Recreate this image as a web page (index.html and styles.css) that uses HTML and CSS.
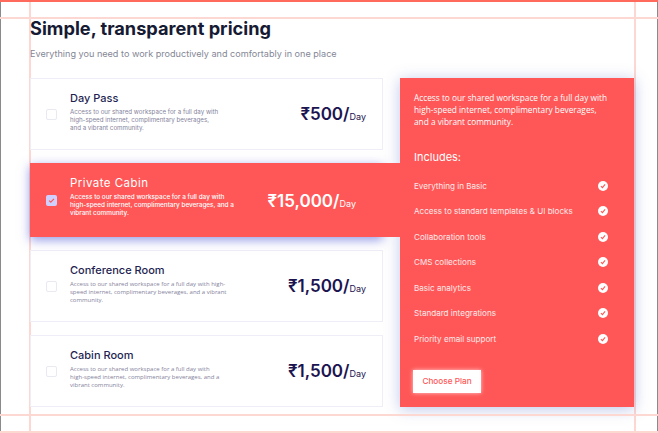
FILE: index.html
```html
<!DOCTYPE html>
<html>
<head>
    <meta charset="UTF-8">
    <meta name="viewport" content="width=device-width, initial-scale=1.0">
    <title>Pricing</title>
    <link rel="stylesheet" href="styles.css">
</head>
<body>
    <!-- design guides -->
    <div class="guide guide-h guide-top"></div>
    <div class="guide guide-h guide-top2"></div>
    <div class="guide guide-h guide-bottom"></div>
    <div class="guide guide-h guide-bottom2"></div>
    <div class="guide guide-v guide-left"></div>
    <div class="guide guide-v guide-right"></div>

    <section class="pricing">
        <h1 class="pricing-title">Simple, transparent pricing</h1>
        <p class="pricing-sub">Everything you need to work productively and comfortably in one place</p>

        <div class="pricing-body">
            <div class="plans">
                <div class="plan">
                    <span class="checkbox"></span>
                    <div class="plan-info">
                        <h3 class="plan-name">Day Pass</h3>
                        <p class="plan-desc plan-desc-tight">Access to our shared workspace for a full day with<br>high-speed internet, complimentary beverages,<br>and a vibrant community.</p>
                    </div>
                    <div class="plan-price"><span class="amount">₹500/</span><span class="unit">Day</span></div>
                </div>

                <div class="plan plan-active">
                    <span class="checkbox checkbox-on">
                        <svg viewBox="0 0 12 12" width="11" height="11"><path d="M3.4 6.2 5.2 7.9 8.7 4.2" fill="none" stroke="#ff5757" stroke-width="1.3"/></svg>
                    </span>
                    <div class="plan-info">
                        <h3 class="plan-name">Private Cabin</h3>
                        <p class="plan-desc plan-desc-tight">Access to our shared workspace for a full day with<br>high-speed internet, complimentary beverages, and a<br>vibrant community.</p>
                    </div>
                    <div class="plan-price"><span class="amount">₹15,000/</span><span class="unit">Day</span></div>
                </div>

                <div class="plan">
                    <span class="checkbox"></span>
                    <div class="plan-info">
                        <h3 class="plan-name">Conference Room</h3>
                        <p class="plan-desc">Access to our shared workspace for a full day with high-<br>speed internet, complimentary beverages, and a vibrant<br>community.</p>
                    </div>
                    <div class="plan-price"><span class="amount">₹1,500/</span><span class="unit">Day</span></div>
                </div>

                <div class="plan">
                    <span class="checkbox"></span>
                    <div class="plan-info">
                        <h3 class="plan-name">Cabin Room</h3>
                        <p class="plan-desc">Access to our shared workspace for a full day with<br>high-speed internet, complimentary beverages, and a<br>vibrant community.</p>
                    </div>
                    <div class="plan-price"><span class="amount">₹1,500/</span><span class="unit">Day</span></div>
                </div>
            </div>

            <aside class="details">
                <p class="details-text">Access to our shared workspace for a full day with<br>high-speed internet, complimentary beverages,<br>and a vibrant community.</p>
                <h4 class="details-title">Includes:</h4>
                <ul class="features">
                    <li>Everything in Basic <svg class="tick" viewBox="0 0 10 10"><circle cx="5" cy="5" r="5" fill="#fff"/><path d="M2.9 5.2 4.4 6.6 7.1 3.4" fill="none" stroke="#ff5757" stroke-width="1.1"/></svg></li>
                    <li>Access to standard templates &amp; UI blocks <svg class="tick" viewBox="0 0 10 10"><circle cx="5" cy="5" r="5" fill="#fff"/><path d="M2.9 5.2 4.4 6.6 7.1 3.4" fill="none" stroke="#ff5757" stroke-width="1.1"/></svg></li>
                    <li>Collaboration tools <svg class="tick" viewBox="0 0 10 10"><circle cx="5" cy="5" r="5" fill="#fff"/><path d="M2.9 5.2 4.4 6.6 7.1 3.4" fill="none" stroke="#ff5757" stroke-width="1.1"/></svg></li>
                    <li>CMS collections <svg class="tick" viewBox="0 0 10 10"><circle cx="5" cy="5" r="5" fill="#fff"/><path d="M2.9 5.2 4.4 6.6 7.1 3.4" fill="none" stroke="#ff5757" stroke-width="1.1"/></svg></li>
                    <li>Basic analytics <svg class="tick" viewBox="0 0 10 10"><circle cx="5" cy="5" r="5" fill="#fff"/><path d="M2.9 5.2 4.4 6.6 7.1 3.4" fill="none" stroke="#ff5757" stroke-width="1.1"/></svg></li>
                    <li>Standard integrations <svg class="tick" viewBox="0 0 10 10"><circle cx="5" cy="5" r="5" fill="#fff"/><path d="M2.9 5.2 4.4 6.6 7.1 3.4" fill="none" stroke="#ff5757" stroke-width="1.1"/></svg></li>
                    <li>Priority email support <svg class="tick" viewBox="0 0 10 10"><circle cx="5" cy="5" r="5" fill="#fff"/><path d="M2.9 5.2 4.4 6.6 7.1 3.4" fill="none" stroke="#ff5757" stroke-width="1.1"/></svg></li>
                </ul>
                <button class="choose-btn">Choose Plan</button>
            </aside>
        </div>
    </section>
</body>
</html>
```

FILE: styles.css
```css
* {
    margin: 0;
    padding: 0;
    box-sizing: border-box;
}

html, body {
    height: 100%;
    overflow: hidden;
}

body {
    background-color: #ffffff;
    color: #161a33;
    font-family: 'Inter', sans-serif;
    border-left: 1px solid #8a8a8a;
    border-right: 1px solid #8a8a8a;
}

/* Guides drawn over the page */
.guide {
    position: absolute;
    background: #fdd8d2;
    z-index: 20;
}

.guide-h {
    left: 0;
    width: 100%;
    height: 2px;
}

.guide-v {
    top: 0;
    width: 2px;
    height: 100%;
    z-index: 0;
}

.guide-top {
    top: 0;
    background: #ff6a5c;
}

.guide-top2 { top: 17px; }
.guide-bottom { top: 414px; }
.guide-bottom2 { top: 431px; }
.guide-left { left: 29px; }
.guide-right { left: 634px; }

.pricing {
    padding: 18px 23px 0 29px;
    position: relative;
    z-index: 1;
}

.pricing-title {
    font-size: 18.2px;
    line-height: 20px;
    font-weight: 700;
}

.pricing-sub {
    margin-top: 10px;
    font-size: 9.1px;
    line-height: 12px;
    color: #858796;
}

.pricing-body {
    display: flex;
    gap: 17px;
    margin-top: 18px;
}

.plans {
    width: 353px;
    display: flex;
    flex-direction: column;
    gap: 13px;
}

.plan {
    height: 72px;
    display: flex;
    align-items: center;
    padding: 0 16px 0 15px;
    border: 1px solid #eeeef6;
    background: #fff;
}

.plan-active {
    height: 74px;
    padding: 0 27px 0 16px;
    background: #ff5757;
    border: none;
    color: #fff;
    position: relative;
    z-index: 1;
    box-shadow: 0 3px 10px rgba(60, 70, 210, 0.55);
}

/* joins the selected row to the panel */
.plan-active::after {
    content: '';
    position: absolute;
    left: 100%;
    top: 0;
    width: 17px;
    height: 100%;
    background: #ff5757;
}

.checkbox {
    flex: none;
    width: 11px;
    height: 11px;
    border: 1px solid #e9e9f2;
    border-radius: 2px;
    background: #fff;
    margin-right: 13px;
}

.checkbox-on {
    background: #d0d0ff;
    border: none;
    display: flex;
}

.plan-info {
    flex: 1;
    padding-bottom: 5px;
}

.plan-name {
    font-size: 11px;
    line-height: 14px;
    font-weight: 500;
    color: #241f52;
    margin-bottom: 3px;
}

.plan-desc {
    font-family: 'Open Sans', sans-serif;
    font-size: 6px;
    line-height: 8.3px;
    color: #85839c;
}

.plan-desc-tight {
    font-family: 'Inter', sans-serif;
    font-size: 6.2px;
    line-height: 7.7px;
    margin-top: 1px;
}

.plan-active .plan-name {
    color: #fff;
    font-size: 11.5px;
    font-weight: 400;
    letter-spacing: 0.45px;
    margin-bottom: 4px;
}

.plan-active .plan-desc {
    color: #fff;
    font-size: 6.4px;
    font-weight: 500;
    line-height: 7.8px;
    padding-bottom: 1px;
}

.plan-price {
    white-space: nowrap;
    color: #1b1450;
}

.plan-active .plan-price {
    color: #fff;
    margin-top: 2px;
}

.amount {
    font-size: 17px;
    font-weight: 600;
}

.unit {
    font-size: 9px;
}

/* Right panel */
.details {
    width: 234px;
    height: 329px;
    background: #ff5757;
    color: #fff;
    padding: 14px 14px 0;
    box-shadow: 0 2px 14px rgba(70, 90, 190, 0.35);
}

.details-text {
    font-family: 'Open Sans', sans-serif;
    font-size: 8.3px;
    font-weight: 500;
    line-height: 12px;
}

.details-title {
    margin-top: 22px;
    font-size: 11px;
    line-height: 14px;
    font-weight: 400;
}

.features {
    list-style: none;
    margin-top: 9px;
}

.features li {
    display: flex;
    justify-content: space-between;
    align-items: center;
    height: 25.5px;
    padding-right: 12px;
    font-size: 8.1px;
    color: #ffe9e9;
}

.tick {
    width: 10px;
    height: 10px;
}

.choose-btn {
    margin: 18px 0 0 -1px;
    width: 68px;
    height: 23px;
    background: #fff;
    border: none;
    color: #ff5757;
    font-family: 'Inter', sans-serif;
    font-size: 8.2px;
    font-weight: 500;
    box-shadow: 0 0 4px rgba(255, 255, 255, 0.7);
}
```
